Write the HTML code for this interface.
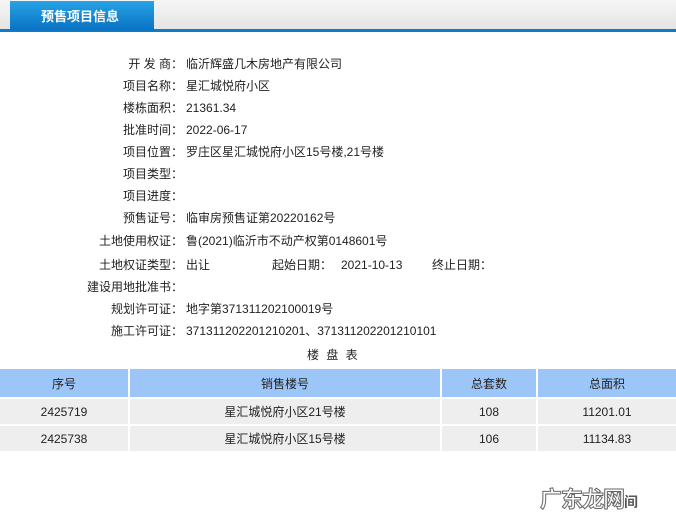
<!DOCTYPE html>
<html><head><meta charset="utf-8"><style>
*{margin:0;padding:0;box-sizing:border-box}
body{width:676px;height:527px;background:#fff;font-family:"Liberation Sans","Noto Sans CJK SC",sans-serif;font-size:12px;color:#222;position:relative;overflow:hidden}
.top{position:absolute;left:0;top:0;width:676px;height:29px;background:linear-gradient(#f6f6f6,#e4e4e4)}
.line{position:absolute;left:0;top:29px;width:676px;height:3px;background:#0e7ac8}
.tab{position:absolute;left:10px;top:1px;width:144px;height:29px;background:linear-gradient(#27a3e6,#0a72c2);color:#fff;font-weight:bold;font-size:13px;line-height:32px;padding-left:31px}
.r{position:absolute;left:0;width:676px;height:20px;line-height:20px;white-space:nowrap}
.l{position:absolute;right:493px;text-align:right}
.v{position:absolute;left:186px}
.tw{position:absolute;left:0;top:367px;width:676px;overflow:hidden}
table{border-collapse:separate;border-spacing:2px;margin-left:-2px;width:680px}
td,th{text-align:center;font-weight:normal;font-size:12px}
th{background:#9cc6f8;height:28px}
td{background:#eee;height:25px}
</style></head><body>
<div class="top"></div><div class="line"></div><div class="tab">预售项目信息</div>
<div class="r" style="top:54px"><span class="l">开 发 商：</span><span class="v">临沂辉盛几木房地产有限公司</span></div>
<div class="r" style="top:76px"><span class="l">项目名称：</span><span class="v">星汇城悦府小区</span></div>
<div class="r" style="top:98px"><span class="l">楼栋面积：</span><span class="v">21361.34</span></div>
<div class="r" style="top:120px"><span class="l">批准时间：</span><span class="v">2022-06-17</span></div>
<div class="r" style="top:142px"><span class="l">项目位置：</span><span class="v">罗庄区星汇城悦府小区15号楼,21号楼</span></div>
<div class="r" style="top:164px"><span class="l">项目类型：</span></div>
<div class="r" style="top:186px"><span class="l">项目进度：</span></div>
<div class="r" style="top:208px"><span class="l">预售证号：</span><span class="v">临审房预售证第20220162号</span></div>
<div class="r" style="top:231px"><span class="l">土地使用权证：</span><span class="v">鲁(2021)临沂市不动产权第0148601号</span></div>
<div class="r" style="top:255px"><span class="l">土地权证类型：</span><span class="v">出让</span><span style="position:absolute;left:272px">起始日期：</span><span style="position:absolute;left:341px">2021-10-13</span><span style="position:absolute;left:432px">终止日期：</span></div>
<div class="r" style="top:277px"><span class="l">建设用地批准书：</span></div>
<div class="r" style="top:299px"><span class="l">规划许可证：</span><span class="v">地字第371311202100019号</span></div>
<div class="r" style="top:321px"><span class="l">施工许可证：</span><span class="v">371311202201210201、371311202201210101</span></div>
<div class="r" style="top:345px;left:307px;width:80px;letter-spacing:2px">楼 盘 表</div>
<div class="tw"><table>
<tr><th style="width:128px">序号</th><th style="width:310px">销售楼号</th><th style="width:94px">总套数</th><th>总面积</th></tr>
<tr><td>2425719</td><td>星汇城悦府小区21号楼</td><td>108</td><td>11201.01</td></tr>
<tr><td>2425738</td><td>星汇城悦府小区15号楼</td><td>106</td><td>11134.83</td></tr>
</table></div>
<div style="position:absolute;left:540px;top:482px;font-size:22px;font-weight:bold;color:#fff;-webkit-text-stroke:1px #666;letter-spacing:-1px">广东龙网<span style="font-size:14px;color:#555;-webkit-text-stroke:0">间</span></div>
</body></html>
